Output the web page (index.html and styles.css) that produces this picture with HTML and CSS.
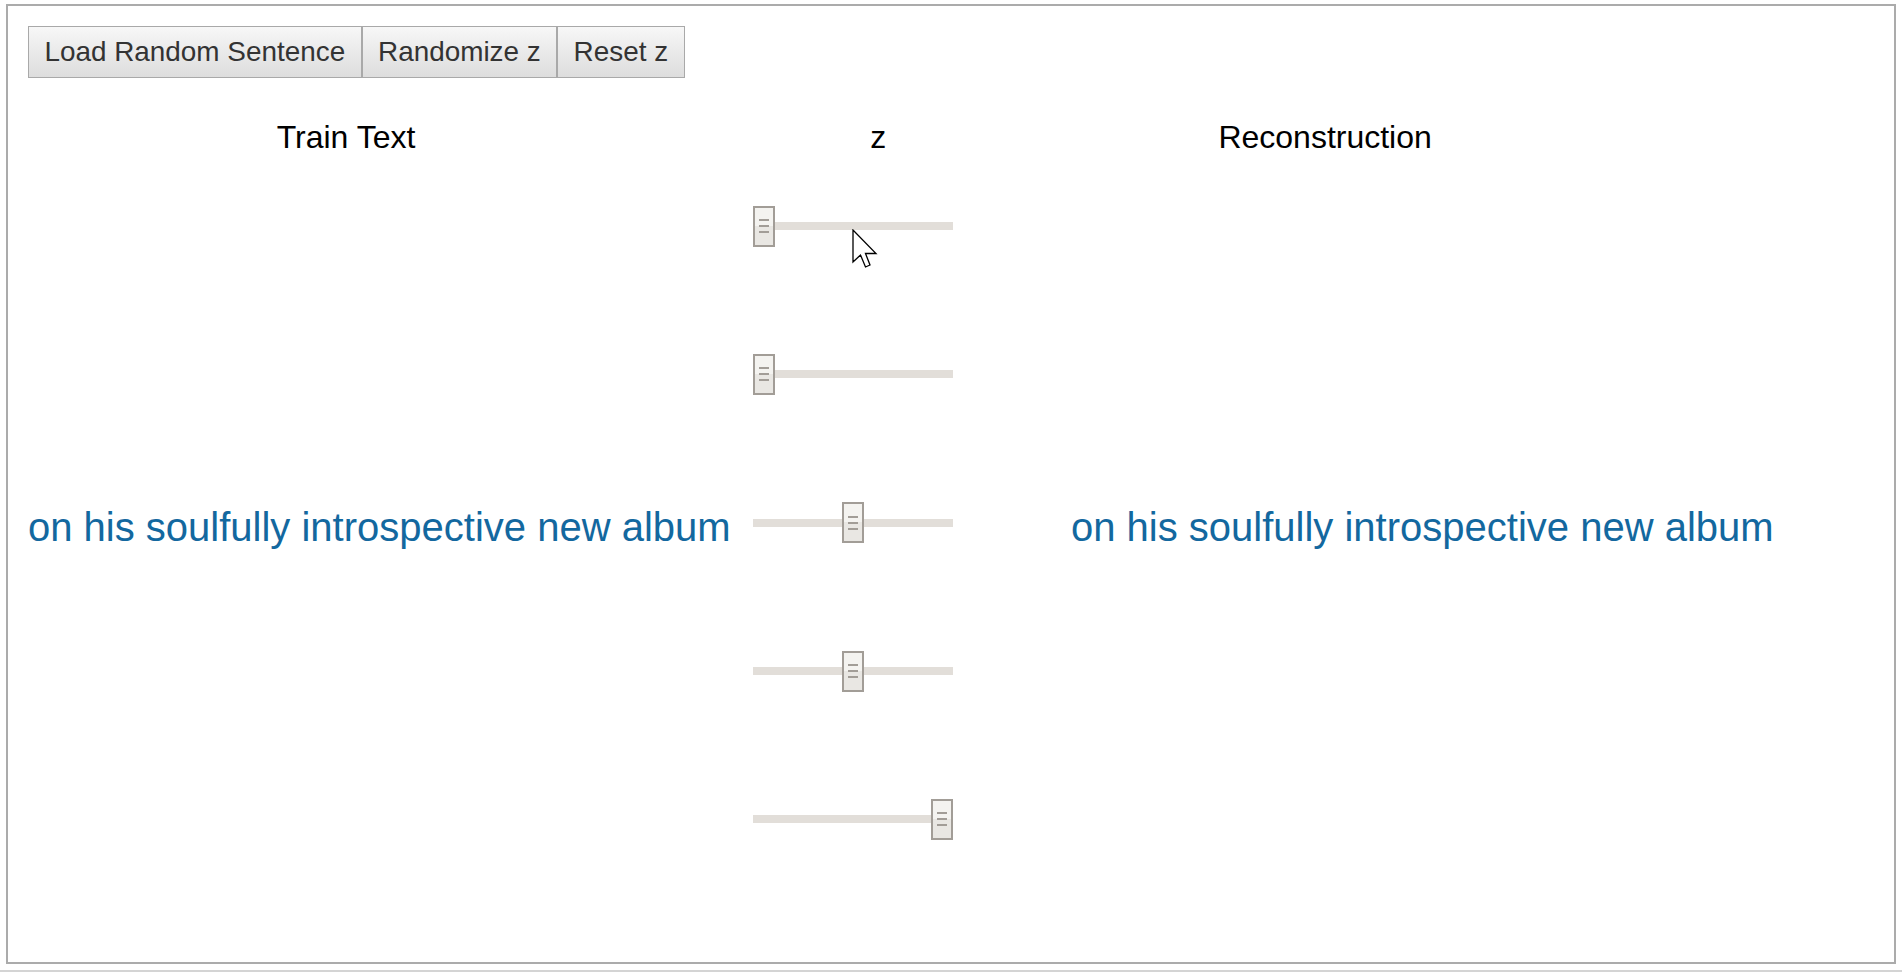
FILE: index.html
```html
<!DOCTYPE html>
<html lang="en">
<head>
<meta charset="utf-8">
<title>Sentence VAE</title>
<link rel="stylesheet" href="styles.css">
</head>
<body>
<div class="frame">
  <div class="toolbar">
    <button class="btn">Load Random Sentence</button>
    <button class="btn">Randomize z</button>
    <button class="btn">Reset z</button>
  </div>
  <div class="heads">
    <div class="head">Train Text</div>
    <div class="head">z</div>
    <div class="head">Reconstruction</div>
  </div>
  <div class="body">
    <div class="col-text"><span class="sentence">on his soulfully introspective new album</span></div>
    <div class="col-z">
      <div class="slider-row"><div class="slider"><div class="track"></div><div class="thumb" style="left:0px"><div class="grip"></div></div></div></div>
      <div class="slider-row"><div class="slider"><div class="track"></div><div class="thumb" style="left:0px"><div class="grip"></div></div></div></div>
      <div class="slider-row"><div class="slider"><div class="track"></div><div class="thumb" style="left:89px"><div class="grip"></div></div></div></div>
      <div class="slider-row"><div class="slider"><div class="track"></div><div class="thumb" style="left:89px"><div class="grip"></div></div></div></div>
      <div class="slider-row"><div class="slider"><div class="track"></div><div class="thumb" style="left:178px"><div class="grip"></div></div></div></div>
    </div>
    <div class="col-text col-recon"><span class="sentence">on his soulfully introspective new album</span></div>
  </div>
</div>
<div class="bottom-line"></div>
<svg class="cursor" width="26" height="40" viewBox="0 0 26 40" aria-hidden="true">
  <path d="M1 1 L1 33 L8.5 26 L13.5 38 L18 36 L13.5 24.5 L24 24.5 Z" fill="#fff" stroke="#000" stroke-width="1.3" stroke-linejoin="miter"/>
</svg>
</body>
</html>
```

FILE: styles.css
```css
html, body {
  margin: 0;
  height: 972px;
  overflow: hidden;
  background: #fff;
}

body {
  padding: 4px 6px 0;
  box-sizing: border-box;
  font-family: "Liberation Sans", Arial, sans-serif;
}

.frame {
  width: 1890px;
  height: 960px;
  box-sizing: border-box;
  border: 2px solid #ababab;
  padding: 20px;
}

.bottom-line {
  margin: 6px -6px 0;
  height: 2px;
  background: #d4d4d4;
}

.toolbar {
  display: flex;
  height: 52px;
}

.btn {
  font-family: "Liberation Sans", Arial, sans-serif;
  font-size: 27.9px;
  color: #333;
  height: 52px;
  padding: 0 15.4px;
  margin: 0;
  border: 1px solid #a9a9a9;
  border-radius: 0;
  background: linear-gradient(to bottom, #f7f7f7, #dddddd);
  white-space: nowrap;
}

.heads {
  display: grid;
  grid-template-columns: 636px 428.6px 465px;
  margin-top: 44px;
  height: 30px;
}

.head {
  font-size: 32px;
  line-height: 30px;
  text-align: center;
  color: #000;
  white-space: nowrap;
}

.body {
  display: grid;
  grid-template-columns: 725px 200px 1fr;
}

.col-text {
  display: flex;
  align-items: center;
  padding-top: 9px;
  white-space: nowrap;
}

.col-recon {
  padding-left: 118px;
}

.sentence {
  font-size: 40px;
  color: #13689f;
}

.col-z {
  display: flex;
  flex-direction: column;
}

.slider-row {
  height: 148.3px;
  display: flex;
  align-items: center;
}

.slider {
  position: relative;
  width: 200px;
  height: 41px;
  display: flex;
  align-items: center;
}

.track {
  flex: 1;
  height: 8px;
  background: #e2ded9;
}

.thumb {
  position: absolute;
  top: 0;
  width: 22px;
  height: 41px;
  box-sizing: border-box;
  border: 2px solid #a29d97;
  background: linear-gradient(to bottom, #f4f3f0 0, #f4f3f0 48%, #e9e7e3 48%, #e9e7e3 100%);
  display: flex;
  align-items: center;
  justify-content: center;
}

.grip {
  width: 10px;
  height: 14px;
  background: repeating-linear-gradient(to bottom, #a29d97 0, #a29d97 2px, transparent 2px, transparent 6px);
}

.cursor {
  position: absolute;
  left: 852px;
  top: 229px;
}
```
